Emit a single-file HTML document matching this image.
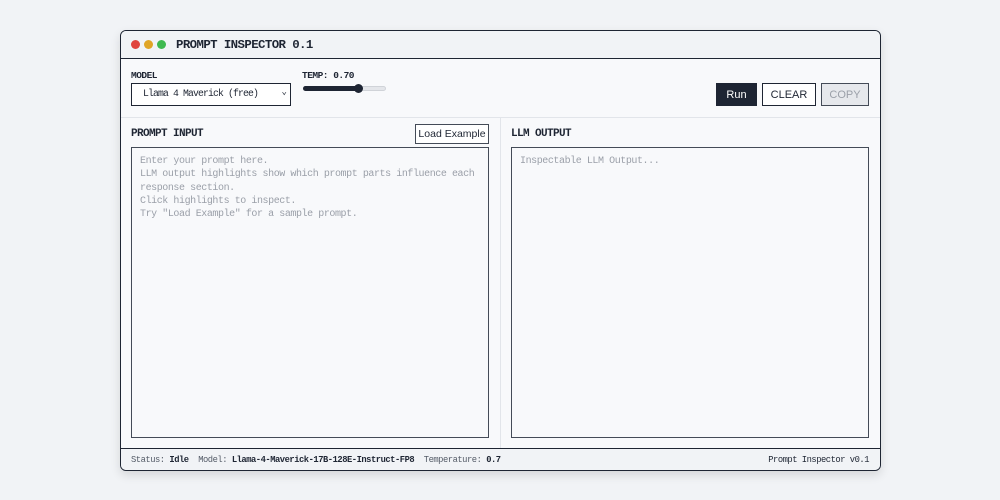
<!DOCTYPE html>
<html><head><style>
*{box-sizing:border-box;margin:0;padding:0}
body{width:1000px;height:500px;background:#f1f3f6;font-family:"Liberation Mono",monospace;color:#1e2533;position:relative;overflow:hidden}
.win{position:absolute;left:120px;top:30px;width:761px;height:441px;border:1.5px solid #1e2533;border-radius:6px;background:#f8f9fb;box-shadow:0 4px 10px rgba(0,0,0,.12);overflow:hidden}
.a{position:absolute}
.title{left:0;top:0;width:100%;height:28px;background:#f1f3f6;border-bottom:1.5px solid #1e2533}
.dot{width:9px;height:9px;border-radius:50%;top:9px}
.lbl{font-size:9.5px;letter-spacing:-0.5px;font-weight:bold}
.h{font-size:11px;letter-spacing:-0.6px;font-weight:bold}
.ta{border:1px solid #444b57;background:#f8f9fb;font-size:10px;letter-spacing:-0.43px;line-height:13.3px;color:#9a9fa8;padding:7px 8px}
.btn{font-family:"Liberation Sans",sans-serif;font-size:11px;display:flex;align-items:center;justify-content:center}
</style></head><body>
<div class="win">
 <div class="a title">
  <div class="a dot" style="left:10px;background:#e0443e"></div>
  <div class="a dot" style="left:23px;background:#e0a526"></div>
  <div class="a dot" style="left:36px;background:#3fb950"></div>
  <div class="a" style="left:55px;top:7px;font-size:12.4px;letter-spacing:-0.6px;font-weight:bold">PROMPT INSPECTOR 0.1</div>
 </div>
 <div class="a" style="left:0;top:86px;width:100%;height:1px;background:#e2e5ea"></div>
 <div class="a lbl" style="left:10px;top:39px">MODEL</div>
 <div class="a" style="left:10px;top:52px;width:160px;height:23px;border:1.5px solid #1e2533;background:#fff;font-size:9.8px;letter-spacing:-0.88px;padding:4px 0 0 11px">Llama 4 Maverick (free)<span style="position:absolute;right:4px;top:3px;font-size:9px">⌄</span></div>
 <div class="a lbl" style="left:181px;top:39px">TEMP: 0.70</div>
 <div class="a" style="left:182px;top:55px;width:83px;height:5px;border-radius:3px;background:#e4e6ea;border:1px solid #d0d3d8"></div>
 <div class="a" style="left:182px;top:55px;width:57px;height:5px;border-radius:3px;background:#1e2533"></div>
 <div class="a" style="left:233px;top:53px;width:9px;height:9px;border-radius:50%;background:#1e2533"></div>
 <div class="a btn" style="left:595px;top:52px;width:41px;height:23px;background:#1e2533;color:#fff">Run</div>
 <div class="a btn" style="left:641px;top:52px;width:54px;height:23px;background:#fff;border:1.5px solid #1e2533">CLEAR</div>
 <div class="a btn" style="left:700px;top:52px;width:48px;height:23px;background:#e6e8ec;border:1.5px solid #444b57;color:#9a9fa8">COPY</div>
 <div class="a" style="left:379px;top:87px;width:1px;height:330px;background:#e2e5ea"></div>
 <div class="a h" style="left:10px;top:97px">PROMPT INPUT</div>
 <div class="a btn" style="left:294px;top:93px;width:74px;height:20px;background:#fff;border:1px solid #444b57;font-size:10.5px">Load Example</div>
 <div class="a ta" style="left:10px;top:116px;width:358px;height:291px">Enter your prompt here.<br>LLM output highlights show which prompt parts influence each<br>response section.<br>Click highlights to inspect.<br>Try "Load Example" for a sample prompt.</div>
 <div class="a h" style="left:390px;top:97px">LLM OUTPUT</div>
 <div class="a ta" style="left:390px;top:116px;width:358px;height:291px">Inspectable LLM Output...</div>
 <div class="a" style="left:0;top:417px;width:100%;height:24px;background:#f1f3f6;border-top:1.5px solid #1e2533;font-size:8.8px;letter-spacing:-0.48px;padding:6px 10px;color:#555c68;white-space:pre">Status: <b style="color:#1e2533">Idle</b>  Model: <b style="color:#1e2533">Llama-4-Maverick-17B-128E-Instruct-FP8</b>  Temperature: <b style="color:#1e2533">0.7</b><span style="position:absolute;right:11px;top:6px;color:#1e2533">Prompt Inspector v0.1</span></div>
</div>
</body></html>
